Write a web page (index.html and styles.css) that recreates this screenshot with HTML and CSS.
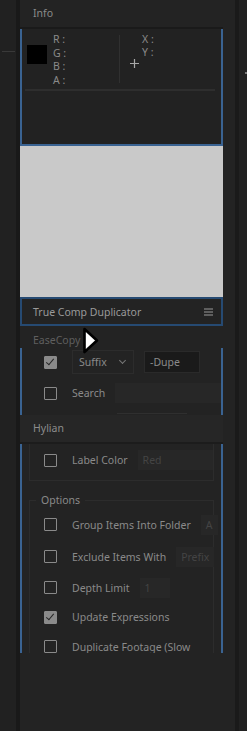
FILE: index.html
```html
<!DOCTYPE html>
<html lang="en">
<head>
  <meta charset="UTF-8">
  <title>Info / True Comp Duplicator</title>
  <link rel="stylesheet" href="styles.css">
</head>
<body>
  <!-- left dock strip -->
  <div class="dock-left">
    <div class="dock-line"></div>
  </div>

  <!-- main panel column -->
  <div class="main">
    <div class="tab-head">Info</div>

    <div class="info-panel">
      <div class="info-top">
        <div class="swatch"></div>
        <div class="rgba">
          <span>R :</span>
          <span>G :</span>
          <span>B :</span>
          <span>A :</span>
        </div>
        <div class="info-divider"></div>
        <div class="xy">
          <svg class="cross" width="9" height="9" viewBox="0 0 9 9">
            <path d="M4.5 0 V9 M0 4.5 H9" stroke="#a8a8a8" stroke-width="1.2"/>
          </svg>
          <div class="xy-labels">
            <span>X :</span>
            <span>Y :</span>
          </div>
        </div>
      </div>
      <div class="info-rule"></div>
    </div>

    <div class="preview"></div>

    <div class="dup-tab">
      <span>True Comp Duplicator</span>
      <svg class="menu" width="9" height="8" viewBox="0 0 9 8">
        <path d="M0 1 H9 M0 4 H9 M0 7 H9" stroke="#9a9a9a" stroke-width="1.2"/>
      </svg>
    </div>

    <div class="section-head dim">EaseCopy</div>

    <div class="panel panel-ease">
      <div class="row row-suffix">
        <span class="check checked"></span>
        <div class="select">Suffix <span class="caret"></span></div>
        <div class="text-input dark">-Dupe</div>
      </div>
      <div class="row row-search">
        <span class="check"></span>
        <span class="label">Search</span>
        <div class="text-input wide"></div>
      </div>
      <div class="ease-rule"></div>
    </div>

    <div class="section-head raised">Hylian</div>

    <div class="panel panel-hylian">
      <div class="group group-top">
        <div class="row">
          <span class="check"></span>
          <span class="label">Label Color</span>
          <div class="text-input faded">Red</div>
        </div>
      </div>

      <div class="group group-options">
        <span class="legend">Options</span>
        <div class="row">
          <span class="check"></span>
          <span class="label">Group Items Into Folder</span>
          <div class="text-input faded">A</div>
        </div>
        <div class="row">
          <span class="check"></span>
          <span class="label">Exclude Items With</span>
          <div class="text-input faded">Prefix</div>
        </div>
        <div class="row">
          <span class="check"></span>
          <span class="label">Depth Limit</span>
          <div class="text-input faded small">1</div>
        </div>
        <div class="row">
          <span class="check checked"></span>
          <span class="label">Update Expressions</span>
        </div>
        <div class="row">
          <span class="check"></span>
          <span class="label">Duplicate Footage (Slow</span>
        </div>
      </div>
    </div>
  </div>

  <!-- right dock strip -->
  <div class="dock-gap"></div>
  <div class="dock-right">
    <span class="dock-mark"></span>
  </div>

  <!-- mouse pointer -->
  <svg class="pointer" width="17" height="27" viewBox="0 0 17 27">
    <path d="M2.5 2 L15 13.5 L2.5 25 Z" fill="#fff" stroke="#000" stroke-width="2.6" stroke-linejoin="round"/>
  </svg>
</body>
</html>
```

FILE: styles.css
```css
/* General */
body {
  margin: 0;
  width: 247px;
  height: 731px;
  overflow: hidden;
  display: flex;
  background-color: #222;
  font-family: "Noto Sans", "Open Sans", sans-serif;
  font-size: 10.5px;
  color: #8a8a8a;
  position: relative;
}

/* Dock strips */
.dock-left {
  width: 16px;
  background-color: #212121;
  border-right: 4px solid #191919;
}

.dock-line {
  height: 1px;
  margin: 51px 1px 0 2px;
  background-color: #393939;
}

.dock-gap {
  width: 4px;
  background-color: #1a1a1a;
}

.dock-right {
  width: 8px;
  background-color: #212121;
  position: relative;
}

.dock-mark {
  position: absolute;
  left: 6px;
  top: 72px;
  width: 2px;
  height: 2px;
  background-color: #7a7a7a;
}

/* Main column */
.main {
  width: 215px;
  background-color: #232323;
  display: flex;
  flex-direction: column;
  padding-right: 12px;
  box-sizing: border-box;
}

.tab-head {
  height: 27px;
  line-height: 27px;
  padding-left: 13px;
  border-bottom: 2px solid #1a1a1a;
}

/* Info panel */
.info-panel {
  height: 115px;
  border: 2px solid #3a6392;
  border-top: none;
  background-color: #222;
}

.info-top {
  display: flex;
  padding: 4px 0 0 5px;
  height: 50px;
}

.swatch {
  width: 20px;
  height: 19px;
  margin-top: 12px;
  background-color: #000;
}

.rgba {
  display: flex;
  flex-direction: column;
  margin-left: 6px;
  line-height: 13.5px;
  width: 66px;
}

.info-divider {
  width: 1px;
  height: 48px;
  margin-top: 2px;
  background-color: #303030;
}

.xy {
  display: flex;
  margin-left: 10px;
}

.cross {
  margin-top: 26px;
}

.xy-labels {
  display: flex;
  flex-direction: column;
  line-height: 13px;
  margin-left: 3px;
}

.info-rule {
  height: 2px;
  margin: 6px 6px 0 3px;
  background-color: #2e2e2e;
}

.preview {
  height: 151px;
  background-color: #c9c9c9;
}

.dup-tab {
  height: 25px;
  border: 2px solid #264a72;
  background-color: #232323;
  display: flex;
  align-items: center;
  justify-content: space-between;
  padding: 0 8px 0 11px;
  color: #9a9a9a;
}

.section-head {
  height: 22px;
  line-height: 28px;
  padding-left: 13px;
}

.section-head.dim {
  color: #5f5f5f;
}

.section-head.raised {
  height: 27px;
  line-height: 27px;
  background-color: #262626;
  border-bottom: 2px solid #1c1c1c;
  color: #8c8c8c;
}

/* Scroll panels */
.panel {
  border-left: 2px solid #3a6392;
  border-right: 2px solid #3a6392;
  overflow: hidden;
}

.panel-ease {
  height: 67px;
}

.panel-hylian {
  height: 209px;
  padding: 0 7px;
}

.row {
  display: flex;
  align-items: center;
  height: 31px;
  padding-left: 22px;
  white-space: nowrap;
}

.group .row {
  padding-left: 14px;
}

.check {
  flex: none;
  width: 11px;
  height: 11px;
  border: 1.5px solid #8a8a8a;
  border-radius: 1px;
  margin-right: 15px;
  position: relative;
}

.check.checked {
  background-color: #8a8a8a;
}

.check.checked::after {
  content: "";
  position: absolute;
  left: 3px;
  top: 0px;
  width: 3px;
  height: 7px;
  border-right: 1.5px solid #262626;
  border-bottom: 1.5px solid #262626;
  transform: rotate(40deg);
}

.label {
  margin-right: 10px;
}

.row-suffix {
  height: 28px;
}

.row-search {
  height: 34px;
}

.select {
  width: 46px;
  height: 22px;
  border: 1px solid #2c2c2c;
  display: flex;
  align-items: center;
  padding: 0 8px 0 6px;
  justify-content: space-between;
  margin: 0 10px 0 0;
}

.caret {
  width: 4px;
  height: 4px;
  border-right: 1px solid #777;
  border-bottom: 1px solid #777;
  transform: rotate(45deg);
  margin-top: -3px;
}

.text-input {
  height: 20px;
  line-height: 20px;
  padding: 0 5px;
  background-color: #272727;
  color: #444;
  flex: 1;
}

.text-input.dark {
  flex: none;
  width: 44px;
  background-color: #1a1a1a;
  color: #8a8a8a;
  border: 1px solid #2a2a2a;
}

.text-input.small {
  flex: none;
  width: 20px;
}

.ease-rule {
  height: 1px;
  width: 70px;
  margin: 3px 0 0 95px;
  background-color: #2f2f2f;
}

.group {
  border: 1px solid #2c2c2c;
  position: relative;
}

.group-top {
  border-top: none;
  height: 36px;
}

.group-top .row {
  height: 32px;
}

.group-options {
  margin-top: 19px;
  padding-top: 7px;
}

.group-options .row:first-of-type {
  height: 33px;
}

.group-options .row:nth-of-type(4) {
  height: 28px;
}

.legend {
  position: absolute;
  top: -8px;
  left: 6px;
  padding: 0 5px;
  background-color: #232323;
}

/* Mouse pointer */
.pointer {
  position: absolute;
  left: 82px;
  top: 327px;
}
```
